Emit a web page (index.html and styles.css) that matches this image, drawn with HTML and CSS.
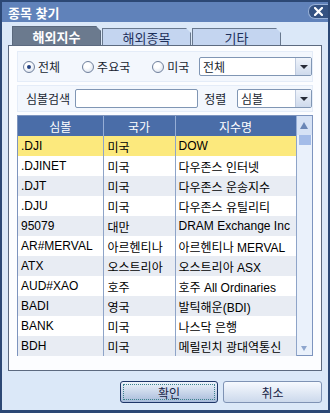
FILE: index.html
```html
<!DOCTYPE html>
<html lang="ko">
<head>
    <meta charset="UTF-8">
    <meta name="viewport" content="width=device-width, initial-scale=1.0">
    <title>종목 찾기</title>
    <link rel="stylesheet" href="styles.css">
</head>
<body>
    <div class="win">
        <div class="title">
            <span class="title-text">종목 찾기</span>
            <span class="close">
                <svg width="9" height="9" viewBox="0 0 9 9"><path d="M1 1 L8 8 M8 1 L1 8" stroke="#fff" stroke-width="2.2" stroke-linecap="square"/></svg>
            </span>
        </div>

        <div class="tabs">
            <div class="tab on">해외지수</div>
            <div class="tab">해외종목</div>
            <div class="tab">기타</div>
        </div>

        <div class="panel">
            <div class="row r1">
                <label class="radio"><span class="dot checked"></span>전체</label>
                <label class="radio"><span class="dot"></span>주요국</label>
                <label class="radio"><span class="dot"></span>미국</label>
                <div class="select wide"><span class="val">전체</span><span class="arrow"></span></div>
            </div>

            <div class="row r2">
                <span class="lbl">심볼검색</span>
                <div class="input"></div>
                <span class="lbl sort">정렬</span>
                <div class="select narrow"><span class="val">심볼</span><span class="arrow"></span></div>
            </div>

            <div class="list">
                <table class="grid">
                    <colgroup>
                        <col class="c1"><col class="c2"><col class="c3">
                    </colgroup>
                    <thead>
                        <tr><th>심볼</th><th>국가</th><th>지수명</th></tr>
                    </thead>
                    <tbody>
                        <tr class="sel"><td>.DJI</td><td>미국</td><td>DOW</td></tr>
                        <tr><td>.DJINET</td><td>미국</td><td>다우존스 인터넷</td></tr>
                        <tr><td>.DJT</td><td>미국</td><td>다우존스 운송지수</td></tr>
                        <tr><td>.DJU</td><td>미국</td><td>다우존스 유틸리티</td></tr>
                        <tr><td>95079</td><td>대만</td><td>DRAM Exchange Inc</td></tr>
                        <tr><td>AR#MERVAL</td><td>아르헨티나</td><td>아르헨티나 MERVAL</td></tr>
                        <tr><td>ATX</td><td>오스트리아</td><td>오스트리아 ASX</td></tr>
                        <tr><td>AUD#XAO</td><td>호주</td><td>호주 All Ordinaries</td></tr>
                        <tr><td>BADI</td><td>영국</td><td>발틱해운(BDI)</td></tr>
                        <tr><td>BANK</td><td>미국</td><td>나스닥 은행</td></tr>
                        <tr><td>BDH</td><td>미국</td><td>메릴린치 광대역통신</td></tr>
                    </tbody>
                </table>
                <div class="sbar">
                    <div class="up"><span class="tri-up"></span></div>
                    <div class="thumb"></div>
                    <div class="track"></div>
                    <div class="down"><span class="tri-down"></span></div>
                </div>
            </div>
        </div>

        <div class="btns">
            <button class="btn ok"><span class="focus">확인</span></button>
            <button class="btn">취소</button>
        </div>
    </div>
</body>
</html>
```

FILE: styles.css
```css
* {
    margin: 0;
    padding: 0;
    box-sizing: border-box;
}

body {
    background-color: rgb(44, 72, 117);
    font-family: 'Liberation Sans', 'Noto Sans CJK KR', sans-serif;
    font-size: 12px;
    color: black;
}

.win {
    width: 330px;
    height: 413px;
    border: 2px solid rgb(44, 72, 117);
    border-bottom-width: 3px;
    background-color: rgb(219, 232, 248);
    display: flex;
    flex-direction: column;
}

.title {
    height: 20px;
    background-color: rgb(96, 130, 186);
    display: flex;
    align-items: center;
    padding-left: 6px;
}

.title-text {
    color: white;
    font-weight: bold;
    font-size: 13px;
}

.close {
    margin-left: auto;
    width: 20px;
    height: 15px;
    border-radius: 7px 0 0 7px;
    background-color: rgb(52, 82, 130);
    border: 1px solid rgb(150, 175, 214);
    border-right: none;
    display: flex;
    align-items: center;
    justify-content: center;
    margin-top: -2px;
}

/* tabs */
.tabs {
    display: flex;
    align-items: flex-end;
    gap: 1px;
    margin-top: 4px;
    padding-left: 10px;
    height: 19px;
}

.tab {
    width: 89px;
    height: 17px;
    background-color: rgb(196, 213, 240);
    border: 1px solid rgb(104, 120, 142);
    border-bottom: none;
    color: rgb(30, 48, 90);
    font-size: 13px;
    display: flex;
    align-items: center;
    justify-content: center;
    clip-path: polygon(0 0, calc(100% - 5px) 0, 100% 5px, 100% 100%, 0 100%);
}

.tab.on {
    height: 19px;
    background-color: rgb(107, 122, 142);
    border-color: rgb(90, 104, 124);
    color: white;
    font-weight: bold;
}

/* panel */
.panel {
    margin: 0 6px;
    height: 326px;
    border: 1px solid rgb(92, 106, 128);
    background-color: rgb(252, 253, 255);
    padding: 5px 8px 14px 8px;
    display: flex;
    flex-direction: column;
    gap: 3px;
}

.row {
    display: flex;
    align-items: center;
    background-color: rgb(243, 247, 253);
    border: 1px solid rgb(228, 236, 248);
    color: rgb(24, 30, 48);
}

.r1 {
    height: 31px;
    padding-left: 5px;
}

.r2 {
    height: 27px;
    padding-left: 8px;
}

.radio {
    display: flex;
    align-items: center;
    gap: 3px;
    margin-right: 22px;
}

.radio:nth-child(3) {
    margin-right: 0;
}

.dot {
    width: 12px;
    height: 12px;
    border-radius: 50%;
    border: 1px solid rgb(112, 128, 156);
    background: radial-gradient(circle at 40% 35%, white 30%, rgb(206, 216, 232));
    display: flex;
    align-items: center;
    justify-content: center;
}

.dot.checked::after {
    content: '';
    width: 4px;
    height: 4px;
    border-radius: 50%;
    background-color: rgb(36, 66, 130);
}

.select {
    height: 19px;
    margin-left: auto;
    background-color: white;
    border: 1px solid rgb(128, 150, 180);
    border-radius: 2px;
    display: flex;
    align-items: center;
}

.select .val {
    flex: 1;
    padding-left: 3px;
}

.select.wide {
    width: 113px;
}

.select.narrow {
    width: 75px;
}

.arrow {
    width: 16px;
    height: 17px;
    background: linear-gradient(rgb(240, 244, 251), rgb(206, 218, 236));
    border-left: 1px solid rgb(190, 202, 222);
    display: flex;
    align-items: center;
    justify-content: center;
}

.arrow::after {
    content: '';
    border-left: 4px solid transparent;
    border-right: 4px solid transparent;
    border-top: 4px solid rgb(40, 44, 56);
}

.lbl {
    margin-right: 5px;
}

.sort {
    margin-left: 6px;
    margin-right: 0;
}

.input {
    width: 123px;
    height: 19px;
    background-color: white;
    border: 1px solid rgb(128, 150, 180);
    border-radius: 2px;
}

/* list */
.list {
    height: 241px;
    border: 1px solid rgb(125, 148, 190);
    display: flex;
    background-color: white;
}

.grid {
    width: 278px;
    border-collapse: collapse;
    table-layout: fixed;
}

.c1 { width: 85px; }
.c2 { width: 72px; }
.c3 { width: 121px; }

.grid th {
    height: 20px;
    background-color: rgb(74, 109, 168);
    color: white;
    font-weight: normal;
    border-right: 1px solid rgb(150, 174, 214);
}

.grid td {
    height: 20px;
    padding: 0 3px;
    white-space: nowrap;
    overflow: hidden;
    border-right: 1px solid rgb(142, 164, 200);
}

.grid td:nth-child(2) {
    padding-left: 4px;
}

.grid tbody tr:nth-child(odd) {
    background-color: rgb(232, 236, 243);
}

.grid tbody tr.sel {
    background-color: rgb(252, 233, 125);
}

.sbar {
    width: 15px;
    display: flex;
    flex-direction: column;
    background-color: rgb(234, 241, 251);
}

.up {
    height: 19px;
    display: flex;
    align-items: center;
    justify-content: center;
    background-color: rgb(214, 226, 245);
}

.tri-up {
    border-left: 4px solid transparent;
    border-right: 4px solid transparent;
    border-bottom: 7px solid rgb(106, 134, 182);
}

.thumb {
    height: 10px;
    margin: 0 1px 0 2px;
    background-color: rgb(164, 188, 232);
}

.track {
    flex: 1;
}

.down {
    height: 14px;
    display: flex;
    align-items: center;
    justify-content: center;
}

.tri-down {
    border-left: 3px solid transparent;
    border-right: 3px solid transparent;
    border-top: 5px solid rgb(142, 166, 206);
}

/* buttons */
.btns {
    display: flex;
    justify-content: flex-end;
    gap: 5px;
    margin-top: 10px;
    padding-right: 6px;
}

.btn {
    width: 99px;
    height: 22px;
    font-family: inherit;
    font-size: 12px;
    color: rgb(24, 36, 70);
    border: 1px solid rgb(126, 146, 180);
    border-radius: 3px;
    background: linear-gradient(rgb(246, 249, 254), rgb(204, 217, 236));
    display: flex;
    align-items: center;
    justify-content: center;
}

.btn.ok {
    width: 98px;
    border: 1px solid rgb(30, 54, 104);
    background: linear-gradient(rgb(236, 243, 251), rgb(168, 187, 218));
    padding: 2px;
}

.focus {
    width: 100%;
    height: 100%;
    border: 1px dotted rgb(60, 130, 140);
    display: flex;
    align-items: center;
    justify-content: center;
}
```
